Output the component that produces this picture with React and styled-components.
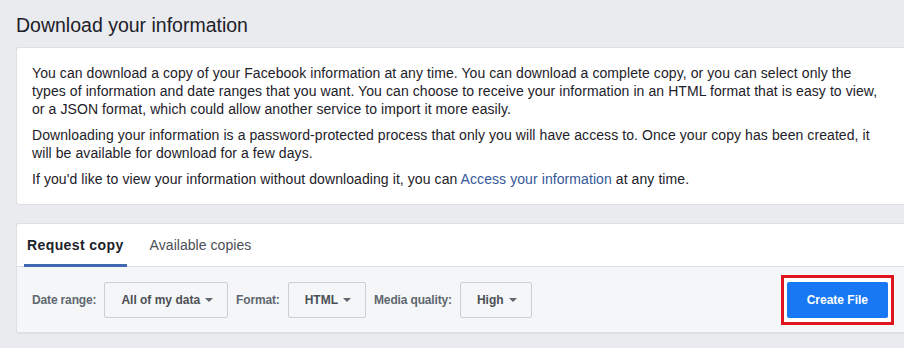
import * as React from 'react';
import styled, { createGlobalStyle } from 'styled-components';

const GlobalStyle = createGlobalStyle`
  html, body {
    margin: 0;
    padding: 0;
    background: #e9ebee;
    overflow: hidden;
  }
  body {
    font-family: "Liberation Sans", Arial, Helvetica, sans-serif;
    color: #1d2129;
  }
`;

const Page = styled.div`
  width: 904px;
  height: 348px;
  padding: 13px 0 0 16px;
  box-sizing: border-box;
`;

const Title = styled.h1`
  margin: 0 0 10px;
  font-size: 19.5px;
  line-height: 24px;
  font-weight: normal;
  color: #1d2129;
`;

const Card = styled.div`
  background: #fff;
  border: 1px solid #dddfe2;
  border-right: none;
  border-radius: 3px 0 0 3px;
  margin-bottom: ${(p) => p.$gap || 0}px;
`;

const Intro = styled.div`
  padding: 16px 0 16px 15px;
  white-space: nowrap;
`;

const Para = styled.p`
  margin: 0 0 8px;
  font-size: 14px;
  line-height: 18px;
  letter-spacing: 0.08px;
  color: #1d2129;
  &:last-child {
    margin-bottom: 0;
  }
`;

const Link = styled.a`
  color: #365899;
  text-decoration: none;
`;

const TabBar = styled.div`
  display: flex;
  gap: 20px;
  padding: 0 7px;
  border-bottom: 1px solid #dddfe2;
`;

const Tab = styled.div`
  padding: 12px 3px 10px;
  font-size: 14px;
  line-height: 18px;
  font-weight: ${(p) => (p.$active ? 'bold' : 'normal')};
  letter-spacing: ${(p) => (p.$active ? '0.4px' : '0.05px')};
  color: ${(p) => (p.$active ? '#1d2129' : '#4b4f56')};
  border-bottom: 3px solid ${(p) => (p.$active ? '#4267b2' : 'transparent')};
  margin-bottom: -1px;
`;

const Toolbar = styled.div`
  display: flex;
  align-items: center;
  gap: 8px;
  height: 65px;
  padding: 0 10px 0 15px;
  background: #f5f6f7;
  border-bottom: 1px solid #dddfe2;
`;

const Label = styled.span`
  font-size: 12px;
  font-weight: bold;
  letter-spacing: -0.15px;
  color: #606770;
`;

const Select = styled.div`
  display: flex;
  align-items: center;
  gap: 5px;
  height: 34px;
  padding: 0 14px 0 16px;
  border: 1px solid #ccd0d5;
  border-radius: 2px;
  background: #f5f6f7;
  font-size: 12px;
  font-weight: bold;
  color: #4b4f56;
  &::after {
    content: '';
    border-left: 4px solid transparent;
    border-right: 4px solid transparent;
    border-top: 4px solid #606770;
    margin-top: 1px;
  }
`;

const Highlight = styled.div`
  margin-left: auto;
  padding: 4px 3px;
  border: 3px solid #e0141e;
  background: #fff;
  display: flex;
`;

const Button = styled.button`
  height: 36px;
  padding: 0 20px;
  border: none;
  border-radius: 2px;
  background: #1877f2;
  color: #fff;
  font-family: inherit;
  font-size: 12px;
  font-weight: bold;
  cursor: pointer;
`;

const filters = [
  { label: 'Date range:', value: 'All of my data' },
  { label: 'Format:', value: 'HTML' },
  { label: 'Media quality:', value: 'High' },
];

export default function App() {
  return (
    <>
      <GlobalStyle />
      <Page>
        <Title>Download your information</Title>
        <Card $gap={18}>
          <Intro>
            <Para>
              You can download a copy of your Facebook information at any time. You can download a
              complete copy, or you can select only the
              <br />
              types of information and date ranges that you want. You can choose to receive your
              information in an HTML format that is easy to view,
              <br />
              or a JSON format, which could allow another service to import it more easily.
            </Para>
            <Para>
              Downloading your information is a password-protected process that only you will have
              access to. Once your copy has been created, it
              <br />
              will be available for download for a few days.
            </Para>
            <Para>
              If you'd like to view your information without downloading it, you can{' '}
              <Link href="#">Access your information</Link> at any time.
            </Para>
          </Intro>
        </Card>
        <Card>
          <TabBar>
            <Tab $active>Request copy</Tab>
            <Tab>Available copies</Tab>
          </TabBar>
          <Toolbar>
            {filters.map((f) => (
              <React.Fragment key={f.label}>
                <Label>{f.label}</Label>
                <Select>{f.value}</Select>
              </React.Fragment>
            ))}
            <Highlight>
              <Button>Create File</Button>
            </Highlight>
          </Toolbar>
        </Card>
      </Page>
    </>
  );
}
